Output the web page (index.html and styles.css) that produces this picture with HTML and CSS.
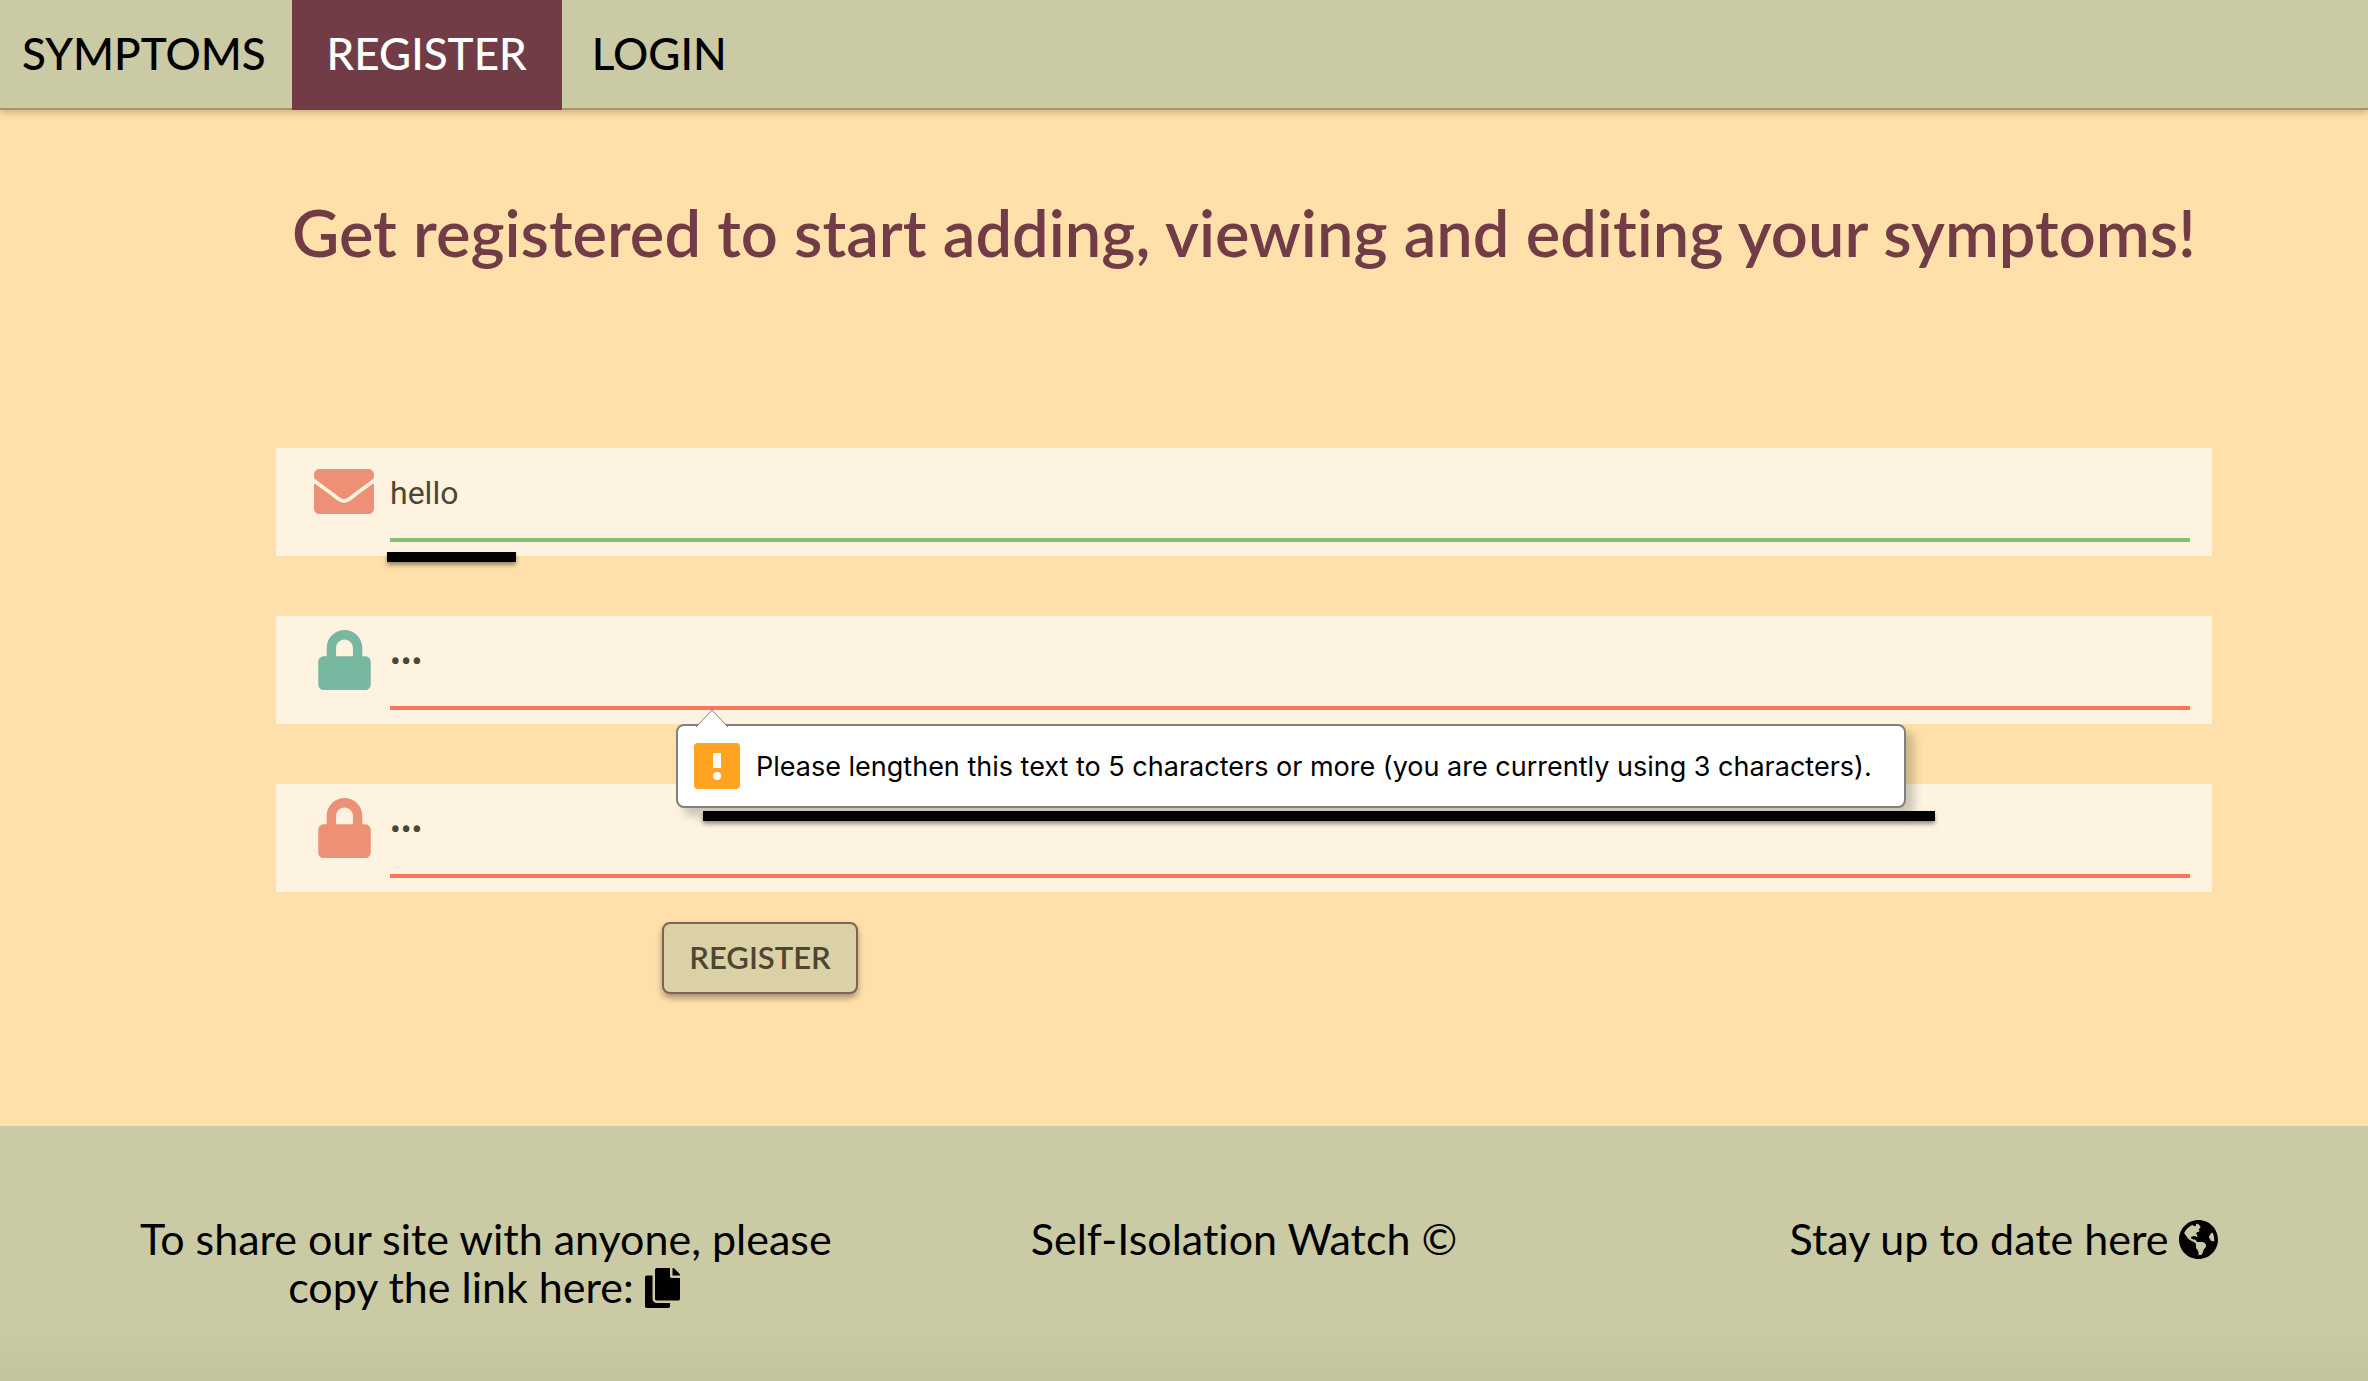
FILE: index.html
```html
<!DOCTYPE html>
<html lang="en">
<head>
<meta charset="utf-8">
<title>Self-Isolation Watch</title>
<link rel="stylesheet" href="styles.css">
</head>
<body>
<nav class="nav">
  <a class="nav-link nav-first" href="#symptoms">SYMPTOMS</a>
  <a class="nav-link active" href="#register" aria-current="page">REGISTER</a>
  <a class="nav-link" href="#login">LOGIN</a>
</nav>

<main class="main">
  <h1 class="title">Get registered to start adding, viewing and editing your symptoms!</h1>
  <form class="form">
    <div class="field">
      <label class="field-icon coral" for="email" aria-label="Email">
        <svg class="icon-envelope" viewBox="0 64 512 384"><path d="M502.300 190.800c3.900-3.100 9.700-.2 9.700 4.700V400c0 26.500-21.500 48-48 48H48c-26.500 0-48-21.500-48-48V195.600c0-5 5.700-7.800 9.700-4.700 22.400 17.400 52.100 39.500 154.100 113.600 21.100 15.400 56.700 47.800 92.200 47.600 35.700.3 72-32.800 92.300-47.600 102-74.100 131.600-96.300 154-113.700zM256 320c23.200.4 56.600-29.200 73.400-41.400 132.700-96.300 142.800-104.700 173.400-128.700 5.800-4.500 9.200-11.500 9.200-18.900v-19c0-26.500-21.500-48-48-48H48c-26.500 0-48 21.500-48 48v19c0 7.400 3.400 14.300 9.200 18.900 30.600 23.900 40.700 32.400 173.400 128.700 16.800 12.200 50.200 41.800 73.400 41.400z"/></svg>
      </label>
      <input class="field-input valid" id="email" type="text" value="hello">
      <span class="mark mark-email"></span>
    </div>
    <div class="field">
      <label class="field-icon green" for="password" aria-label="Password">
        <svg class="icon-lock" viewBox="0 0 448 512"><path d="M400 224h-24v-72C376 68.200 307.800 0 224 0S72 68.200 72 152v72H48c-26.500 0-48 21.500-48 48v192c0 26.500 21.500 48 48 48h352c26.500 0 48-21.500 48-48V272c0-26.500-21.500-48-48-48zm-104 0H152v-72c0-39.700 32.300-72 72-72s72 32.300 72 72v72z"/></svg>
      </label>
      <input class="field-input invalid" id="password" type="password" value="abc">
      <div class="tooltip" role="alert">
        <svg class="tooltip-arrow" viewBox="0 0 34 18"><path d="M1 18 17 1 33 18" fill="#fff" stroke="#808080"/></svg>
        <svg class="tooltip-icon" viewBox="0 0 46 46"><rect width="46" height="46" rx="4" fill="#ffa321"/><rect x="19" y="10" width="8" height="15" fill="#fff"/><circle cx="23" cy="33" r="4" fill="#fff"/></svg>
        <span>Please lengthen this text to 5 characters or more (you are currently using 3 characters).</span>
        <span class="mark mark-tooltip"></span>
      </div>
    </div>
    <div class="field">
      <label class="field-icon coral" for="confirm" aria-label="Confirm password">
        <svg class="icon-lock" viewBox="0 0 448 512"><path d="M400 224h-24v-72C376 68.200 307.800 0 224 0S72 68.200 72 152v72H48c-26.500 0-48 21.500-48 48v192c0 26.500 21.500 48 48 48h352c26.500 0 48-21.500 48-48V272c0-26.500-21.500-48-48-48zm-104 0H152v-72c0-39.700 32.300-72 72-72s72 32.300 72 72v72z"/></svg>
      </label>
      <input class="field-input invalid" id="confirm" type="password" value="abc">
    </div>
    <button class="submit" type="button">REGISTER</button>
  </form>
</main>

<footer class="footer">
  <p class="footer-item">To share our site with anyone, please<br>copy the link here: <a class="footer-link" href="#copy" aria-label="Copy link"><svg class="icon-copy" viewBox="0 0 448 512"><path d="M320 448v40c0 13.255-10.745 24-24 24H24c-13.255 0-24-10.745-24-24V120c0-13.255 10.745-24 24-24h72v296c0 30.879 25.121 56 56 56h168zm0-344V0H152c-13.255 0-24 10.745-24 24v368c0 13.255 10.745 24 24 24h272c13.255 0 24-10.745 24-24V128H344c-13.200 0-24-10.800-24-24zm120.971-31.029L375.029 7.029A24 24 0 0 0 358.059 0H352v96h96v-6.059a24 24 0 0 0-7.029-16.970z"/></svg></a></p>
  <p class="footer-item">Self-Isolation Watch ©</p>
  <p class="footer-item">Stay up to date here <a class="footer-link" href="#news" aria-label="News"><svg class="icon-globe" viewBox="0 8 496 496"><path d="M248 8C111.030 8 0 119.030 0 256s111.030 248 248 248 248-111.030 248-248S384.970 8 248 8zm82.290 357.600c-3.900 3.880-7.990 7.950-11.310 11.280-2.990 3-5.100 6.700-6.170 10.710-1.510 5.660-2.730 11.380-4.770 16.870l-17.390 46.850c-13.760 3-28 4.690-42.650 4.690v-27.380c1.690-12.620-7.640-36.260-22.630-51.250-6-6-9.370-14.140-9.370-22.630v-32.010c0-11.640-6.270-22.340-16.460-27.970-14.370-7.950-34.810-19.060-48.810-26.110-11.480-5.780-22.100-13.140-31.650-21.750l-.8-.72a114.792 114.792 0 0 1-18.060-20.740c-9.380-13.770-24.660-36.420-34.590-51.140 20.470-45.500 57.360-82.040 103.200-101.890l24.010 12.010C203.480 89.740 216 82.010 216 70.110v-11.300c7.990-1.290 16.120-2.110 24.390-2.420l28.300 28.300c6.250 6.250 6.250 16.380 0 22.630L264 112l-10.340 10.340c-3.120 3.120-3.120 8.190 0 11.310l4.690 4.690c3.120 3.120 3.120 8.190 0 11.310l-8 8a8.008 8.008 0 0 1-5.660 2.340h-8.990c-2.080 0-4.080.81-5.580 2.270l-9.920 9.650a8.008 8.008 0 0 0-1.580 9.310l15.590 31.190c2.660 5.320-1.210 11.580-7.150 11.580h-5.640c-1.930 0-3.790-.7-5.240-1.960l-9.280-8.060a16.017 16.017 0 0 0-15.550-3.100l-31.170 10.390a11.950 11.950 0 0 0-8.170 11.340c0 4.530 2.560 8.660 6.610 10.690l11.080 5.540c9.410 4.710 19.790 7.160 30.310 7.160s22.590 27.290 32 32h66.750c8.490 0 16.620 3.370 22.630 9.370l13.690 13.690a30.503 30.503 0 0 1 8.930 21.570 46.536 46.536 0 0 1-13.720 32.980zM417 274.250c-5.790-1.450-10.840-5-14.150-9.970l-17.980-26.970a23.970 23.970 0 0 1 0-26.620l19.590-29.380c2.320-3.470 5.500-6.290 9.240-8.150l12.980-6.490C440.200 193.590 448 223.870 448 256c0 8.670-.74 17.160-1.820 25.540L417 274.250z"/></svg></a></p>
</footer>
</body>
</html>
```
FILE: styles.css
```css
* { box-sizing: border-box; }

body {
  margin: 0;
  min-height: 100vh;
  display: flex;
  flex-direction: column;
  background: #ffe0ab;
  color: #000;
  font-family: Lato, sans-serif;
  font-variant-ligatures: none;
}

svg { fill: currentColor; }

.nav {
  display: flex;
  height: 108px;
  background: #cacba4;
  box-shadow: 0 2px 0 #a9946f, 0 4px 8px rgba(0, 0, 0, 0.25);
}

.nav-link {
  height: 110px;
  padding: 0 30px;
  color: #000;
  font-size: 44px;
  font-weight: 500;
  line-height: 106px;
  text-decoration: none;
}

.nav-first { padding: 0 26px 0 22px; }

.nav-link.active {
  min-width: 270px;
  background: #723c46;
  color: #fff;
  text-align: center;
}

.main {
  flex: 1;
  padding: 80px 156px 132px 276px;
}

.title {
  margin: 0 0 172px;
  color: #723c46;
  font-size: 65px;
  font-weight: 600;
  line-height: 88px;
  text-align: center;
  white-space: nowrap;
}

.field {
  position: relative;
  display: flex;
  height: 108px;
  margin-bottom: 60px;
  padding: 0 22px;
  background: #fdf3e0;
}

.field-icon {
  display: flex;
  flex: 0 0 92px;
  align-items: center;
  justify-content: center;
  height: 87px;
}

.coral { color: #ec9176; }
.green { color: #78b8a0; }

.icon-envelope { width: 60px; height: 45px; }
.icon-lock { width: 53px; height: 60px; }

.field-input {
  flex: 1;
  min-width: 0;
  height: 94px;
  padding: 0;
  border: 0;
  border-bottom: 4px solid;
  outline: 0;
  background: transparent;
  color: #4e4532;
  font-family: Roboto, sans-serif;
  font-size: 32px;
}

.field-input.valid { border-color: #84bd6f; }
.field-input.invalid { border-color: #fb775b; }

.mark {
  position: absolute;
  height: 10px;
  background: #000;
  box-shadow: 0 3px 4px rgba(0, 0, 0, 0.4);
}

.mark-email {
  top: 104px;
  left: 111px;
  width: 129px;
}

.tooltip {
  position: absolute;
  z-index: 1;
  top: 108px;
  left: 400px;
  display: flex;
  align-items: center;
  gap: 16px;
  min-width: 1230px;
  height: 84px;
  padding: 0 16px;
  border: 2px solid #808080;
  border-radius: 8px;
  background: #fff;
  box-shadow: 8px 8px 10px rgba(0, 0, 0, 0.2);
  font-family: Inter, sans-serif;
  font-size: 27px;
  white-space: nowrap;
}

.tooltip-arrow {
  position: absolute;
  top: -17px;
  left: 17px;
  width: 34px;
  height: 18px;
}

.tooltip-icon { width: 46px; height: 46px; }

.mark-tooltip {
  top: 85px;
  left: 25px;
  right: -31px;
}

.submit {
  display: block;
  width: 196px;
  height: 72px;
  margin: -30px 0 0 386px;
  padding: 0 0 2px;
  border: 2px solid #80625a;
  border-radius: 8px;
  background: #dad1a6;
  box-shadow: 0 4px 6px rgba(0, 0, 0, 0.35);
  color: #4e4532;
  font-family: inherit;
  font-size: 31px;
  font-weight: 600;
}

.footer {
  display: grid;
  grid-template-columns: repeat(3, minmax(0, 1fr));
  gap: 72px;
  min-height: 255px;
  padding: 89px 20px 68px 140px;
  background: linear-gradient(#cacba4 80%, #c3c49e);
  font-size: 43px;
  line-height: 48px;
  text-align: center;
}

.footer-item {
  margin: 0;
  white-space: nowrap;
}

.footer-link { color: inherit; }

.icon-copy { width: 35px; height: 40px; vertical-align: -5px; }
.icon-globe { width: 39px; height: 39px; vertical-align: -4px; }
```
